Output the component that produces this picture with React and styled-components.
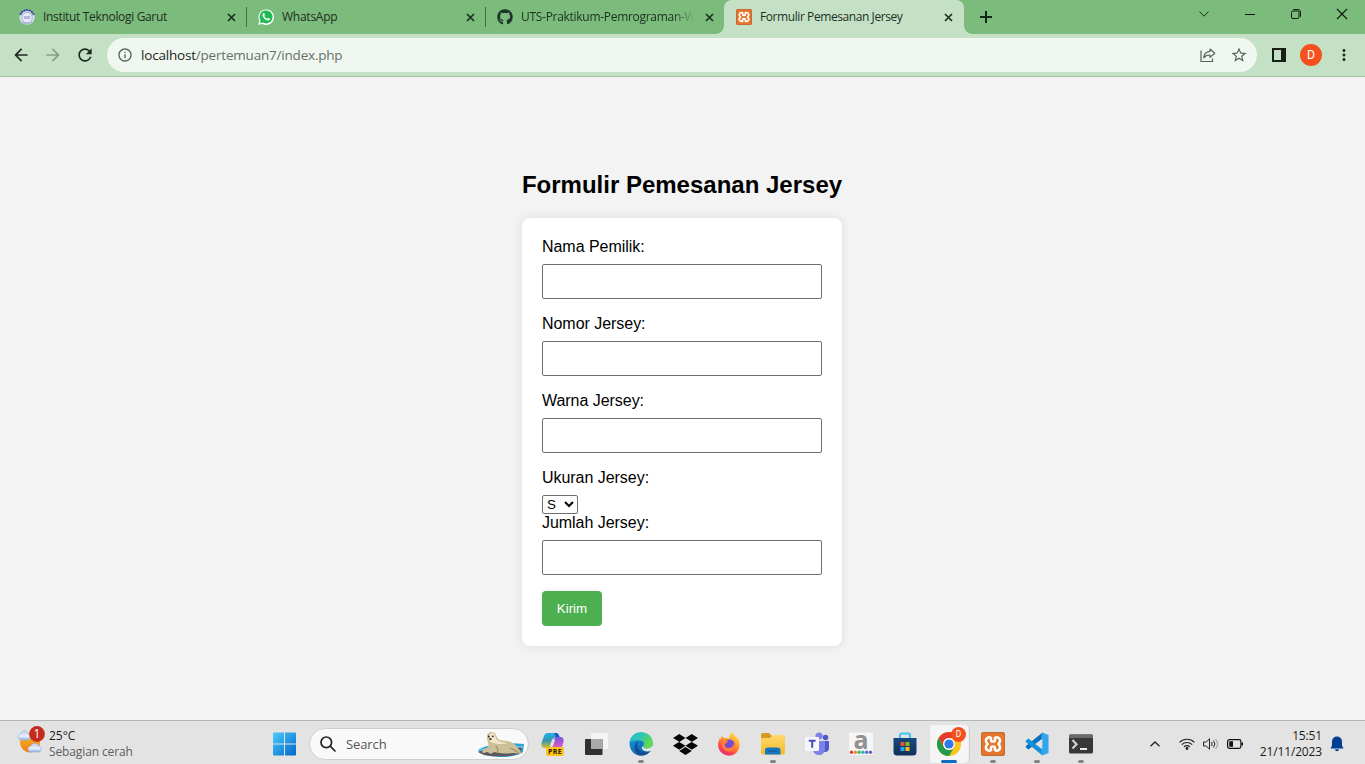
import React from "react";
import styled, { createGlobalStyle } from "styled-components";
import { FaGithub, FaDropbox } from "react-icons/fa";
import { MdArrowBack, MdArrowForward, MdRefresh, MdInfoOutline, MdStarBorder, MdMoreVert } from "react-icons/md";

const Global = createGlobalStyle`
  * { box-sizing: border-box; }
  body { margin: 0; overflow: hidden; }
  svg { display: block; flex: none; overflow: visible; }
`;

const Screen = styled.div`
  display: flex;
  flex-direction: column;
  width: 1365px;
  height: 764px;
  background: #f3f3f3;
  font-family: "Open Sans", "Noto Sans", sans-serif;
`;

/* ---------- Browser frame ---------- */

const TabStrip = styled.div`
  display: flex;
  height: 34px;
  padding-left: 7px;
  background: #7bbb7c;
`;

const Tab = styled.div`
  position: relative;
  display: flex;
  align-items: center;
  width: ${(p) => (p.$active ? 240 : 239)}px;
  padding: 0 ${(p) => (p.$active ? 9 : 8)}px 0 12px;
  border-radius: 8px 8px 0 0;
  background: ${(p) => (p.$active ? "#c5e1c5" : "transparent")};
  color: #1d2f1e;
  &::before, &::after {
    content: "";
    display: ${(p) => (p.$active ? "block" : "none")};
    position: absolute;
    bottom: 0;
    width: 8px;
    height: 8px;
  }
  &::before { left: -8px; background: radial-gradient(circle at 0 0, transparent 7.5px, #c5e1c5 8px); }
  &::after { right: -8px; background: radial-gradient(circle at 100% 0, transparent 7.5px, #c5e1c5 8px); }
`;

const TabDivider = styled.span`
  align-self: center;
  width: 1px;
  height: 20px;
  margin: 0 -1px 0 0;
  background: #426c43;
`;

const TabTitle = styled.span`
  flex: 1;
  min-width: 0;
  margin-left: 8px;
  margin-right: ${(p) => (p.$fade ? 8 : 0)}px;
  overflow: hidden;
  white-space: nowrap;
  font-size: 12px;
  line-height: 18px;
  letter-spacing: ${(p) => p.$track}px;
  mask-image: ${(p) => (p.$fade ? "linear-gradient(90deg, #000 88%, transparent)" : "none")};
`;

const CloseSlot = styled.span`
  display: grid;
  place-items: center;
  flex: none;
  width: 14px;
  height: 14px;
`;

const NewTab = styled.div`
  display: grid;
  place-items: center;
  width: 44px;
`;

const WindowButtons = styled.div`
  display: flex;
  margin-left: auto;
`;

const WindowButton = styled.div`
  display: grid;
  place-items: center;
  width: 46px;
  height: 28px;
`;

const Toolbar = styled.div`
  display: flex;
  align-items: center;
  height: 43px;
  padding: 0 11px 0 11px;
  background: #c5e1c5;
  border-bottom: 1px solid #a2bba3;
`;

const NavButton = styled.span`
  display: grid;
  place-items: center;
  width: 20px;
  margin-right: 12px;
  color: ${(p) => (p.$off ? "#86a087" : "#1f2a20")};
`;

const AddressBar = styled.div`
  display: flex;
  align-items: center;
  width: 1150px;
  height: 34px;
  padding: 0 9px 0 10px;
  border-radius: 17px;
  background: #f0f7f0;
  color: #59615a;
`;

const Url = styled.span`
  flex: 1;
  margin-left: 8px;
  font-size: 13.500px;
  line-height: 20px;
  letter-spacing: -0.2px;
  white-space: nowrap;
  color: #66706a;
  b { font-weight: 400; color: #1c241d; }
`;

const OmniIcon = styled.span`
  margin-left: 14px;
`;

const Avatar = styled.span`
  display: grid;
  place-items: center;
  width: ${(p) => p.$size}px;
  height: ${(p) => p.$size}px;
  border-radius: 50%;
  background: #f4511e;
  color: #fff;
  font: 400 ${(p) => p.$size / 1.8}px/1 Roboto, sans-serif;
`;

const BrowserActions = styled.div`
  display: flex;
  align-items: center;
  margin-left: 14px;
  gap: 13px;
`;

/* ---------- Page ---------- */

const Page = styled.main`
  flex: 1;
  display: flex;
  flex-direction: column;
  align-items: center;
  padding-top: 94px;
  padding-right: 1px;
  font-family: "Liberation Sans", Arial, sans-serif;
  color: #000;
`;

const Heading = styled.h2`
  margin: 0 0 20px;
  font-size: 24px;
  line-height: 27px;
  white-space: nowrap;
`;

const Form = styled.form`
  width: 320px;
  padding: 20px;
  border-radius: 8px;
  background: #fff;
  box-shadow: 0 0 10px rgba(0, 0, 0, 0.1);
`;

const Label = styled.label`
  display: block;
  margin-bottom: 8px;
  font-size: 16px;
  line-height: 18px;
  letter-spacing: -0.04px;
`;

const Field = styled.input`
  display: block;
  width: 100%;
  height: 35px;
  margin: 0 0 16px;
  padding: 8px;
  border: 1px solid #707070;
  border-radius: 2px;
  background: #fff;
`;

const SizeSelect = styled.select`
  display: block;
  width: 36px;
  height: 19px;
  margin: 0;
  border: 1px solid #707070;
  border-radius: 2px;
  background-color: #fff;
  color: #000;
  font: 13.333px "Liberation Sans", Arial, sans-serif;
`;

const Submit = styled.button`
  display: block;
  width: 60px;
  height: 35px;
  padding: 0;
  border: 0;
  border-radius: 4px;
  background: #4caf50;
  color: #fff;
  font: 13.333px "Liberation Sans", Arial, sans-serif;
`;

/* ---------- Taskbar ---------- */

const Taskbar = styled.footer`
  display: flex;
  height: 44px;
  background: #e3e3e3;
  border-top: 1px solid #b5b5b5;
`;

const Weather = styled.div`
  display: flex;
  width: 262px;
  padding: 4px 0 0 17px;
`;

const WeatherText = styled.div`
  margin: 3px 0 0 4px;
  font-size: 12px;
  line-height: 16px;
  color: #1b1b1b;
  white-space: nowrap;
`;

const Muted = styled.div`
  color: #5d5d5d;
  letter-spacing: ${(p) => p.$track || 0}px;
`;

const AppSlot = styled.div`
  position: relative;
  display: grid;
  place-items: center;
  width: 44px;
  height: 43px;
  padding-top: 3px;
`;

const ActiveTile = styled.div`
  display: grid;
  place-items: center;
  width: 38px;
  height: 38px;
  margin: 0 0 0 -1px;
  border-radius: 4px;
  background: #f5f5f5;
  box-shadow: 2px 0 0 -1px #efefef, 3px 0 0 -1px #cfcfcf;
`;

const RunMark = styled.span`
  position: absolute;
  bottom: ${(p) => (p.$active ? 1 : 1)}px;
  left: 50%;
  width: ${(p) => (p.$active ? 16 : 6)}px;
  height: 3px;
  border-radius: 2px;
  transform: translateX(-50%);
  background: ${(p) => (p.$active ? "#0f6cbd" : "#858585")};
`;

const AppBadge = styled.span`
  position: absolute;
  top: 6px;
  right: 5px;
`;

const SearchBox = styled.div`
  display: flex;
  align-items: center;
  width: 220px;
  height: 32px;
  margin: 7px 2px 0 3px;
  padding-left: 10px;
  border: 1px solid #cfcfcf;
  border-radius: 16px;
  background: #f9f9f9;
  overflow: hidden;
`;

const SearchText = styled.span`
  flex: 1;
  margin-left: 10px;
  font-size: 13px;
  letter-spacing: -0.1px;
  color: #555;
`;

const Tray = styled.div`
  display: flex;
  align-items: center;
  margin-left: auto;
  padding: 2px 21px 0 0;
`;

const TrayIcon = styled.span`
  margin-left: ${(p) => p.$gap}px;
`;

const Clock = styled.div`
  width: 78px;
  font-size: 12px;
  line-height: 16px;
  letter-spacing: -0.15px;
  text-align: right;
  color: #1b1b1b;
`;

/* ---------- Drawings ---------- */

const Cross = () => (
  <svg width="9" height="9" viewBox="0 0 9 9"><path d="M1 1l7 7M8 1L1 8" stroke="#1d2f1e" strokeWidth="1.7" /></svg>
);

const CampusIcon = () => (
  <svg width="16" height="16" viewBox="0 0 16 16">
    <circle cx="8" cy="8" r="7.7" fill="#d8e0ee" />
    <path d="M1.300 6A7 7 0 0 1 14.700 6" fill="none" stroke="#34458c" strokeWidth="1.800" strokeDasharray="2.200 .4" />
    <circle cx="8" cy="8.6" r="5.2" fill="#e9edf7" stroke="#8f9bcc" strokeWidth=".7" />
    <path d="M5.200 7.400h5.600v2.200H5.200z" fill="#b3bcdf" stroke="#98a2d0" strokeWidth=".6" />
    <path d="M3 12.7a6.800 6.800 0 0 0 10 0" fill="none" stroke="#a8b2d4" strokeWidth="1.2" />
  </svg>
);

const WhatsIcon = () => (
  <svg width="16" height="16" viewBox="0 0 16 16">
    <path d="M.2 15.8l1.1-4A7.8 7.8 0 1 1 4.4 15z" fill="#fff" />
    <path d="M1.8 14.2l.8-2.8a6.5 6.5 0 1 1 2.2 2.1z" fill="#20b954" />
    <path d="M5.7 4.1c-.5 0-1.4.8-1.2 2.1.3 2.3 3 5 5.3 5.3 1.3.2 2.2-.8 2.1-1.7-.5-.4-1.2-.8-1.8-.9l-.9 1C8 9.500 6.700 8.200 6.200 7.100l.7-.8c-.1-.8-.4-1.600-.7-2.200z" fill="#fff" />
  </svg>
);

const XamppFrame = styled.span`
  display: grid;
  flex: none;
  place-items: center;
  width: ${(p) => p.$size}px;
  height: ${(p) => p.$size}px;
  border-radius: ${(p) => p.$size / 8}px;
  background: #e4762d;
  box-shadow: inset 0 0 0 1px #c8682a;
`;

const XamppGlyph = ({ size }) => (
  <XamppFrame $size={size}>
    <svg width={size} height={size} viewBox="0 0 24 24">
      <path
        d="M10 5.800C7.500 4.600 4.800 6 4.900 8.800c0 1.500.8 2.400 1.900 3.200-1.100.8-1.900 1.700-1.900 3.200-.1 2.800 2.600 4.200 5.100 3v-2.400q0-1.400 2-1.400t2 1.400v2.400c2.500 1.200 5.200-.2 5.100-3 0-1.500-.8-2.400-1.900-3.200 1.100-.8 1.900-1.700 1.900-3.200.1-2.800-2.600-4.200-5.100-3v2.400q0 1.400-2 1.400t-2-1.400z"
        fill="none" stroke="#fff" strokeWidth="2.500" strokeLinejoin="round"
      />
    </svg>
  </XamppFrame>
);

const ShareIcon = () => (
  <svg width="16" height="16" viewBox="0 0 16 16" fill="none" stroke="#59615a" strokeWidth="1.200">
    <path d="M1 3.500v11h11.500v-3" />
    <path d="M10 2l4.800 4.200L10 10.400V8C7 7.900 5.200 8.800 3.800 10.800 4 7.200 6.200 4.800 10 4.400z" strokeLinejoin="round" />
  </svg>
);

const WeatherIcon = () => (
  <svg width="28" height="30" viewBox="0 0 28 30">
    <defs>
      <linearGradient id="sun" x1="0" y1="0" x2="0" y2="1"><stop stopColor="#fbb924" /><stop offset="1" stopColor="#ef7d16" /></linearGradient>
      <linearGradient id="cloud" x1="0" y1="0" x2="0" y2="1"><stop stopColor="#b9cdec" /><stop offset=".6" stopColor="#e8effb" /><stop offset="1" stopColor="#8dafe3" /></linearGradient>
    </defs>
    <circle cx="13" cy="17.500" r="10" fill="url(#sun)" />
    <path d="M4 15a3.300 3.300 0 0 1 0-6.500C5 4.500 10.500 5 11 8.600c3.500.4 3.500 6.400 0 6.400z" fill="url(#cloud)" stroke="#9cb5dc" strokeWidth=".6" />
    <path d="M14 27a3 3 0 0 1 0-6c1-3.800 6.500-3.600 7.300-.2 4 .2 4 6.200 0 6.200z" fill="url(#cloud)" stroke="#8fadde" strokeWidth=".6" />
    <circle cx="20" cy="9" r="7.900" fill="#c42b1c" />
    <text x="20" y="13.300" textAnchor="middle" fontSize="12" fontFamily="Open Sans" fill="#fff">1</text>
  </svg>
);

const StartIcon = () => (
  <svg width="24" height="24" viewBox="-.5 0 24 24">
    <defs><linearGradient id="win" x1="0" y1="0" x2="1" y2="1"><stop stopColor="#4ccbff" /><stop offset="1" stopColor="#0067c8" /></linearGradient></defs>
    <path d="M1.500.5h10v11h-11v-10a1 1 0 0 1 1-1zM12.500.5h10a1 1 0 0 1 1 1v10h-11zM.5 12.500h11v11h-10a1 1 0 0 1-1-1zM12.500 12.500h11v10a1 1 0 0 1-1 1h-10z" fill="url(#win)" />
  </svg>
);

const SealIcon = () => (
  <svg width="53" height="30" viewBox="0 0 53 30">
    <path d="M3 21c9-6 28-8 46-6l-1 8c-6 6-30 6-35 3-6-1-10-2-10-5z" fill="#2ba3d5" />
    <path d="M3 23c6-3 37-6 44-4l-2 5c-6 4-29 4-36 2z" fill="#5d5661" />
    <path d="M3 22c8-4 34-5 45-4" fill="none" stroke="#99d6e8" strokeWidth="1" />
    <path d="M12 9c-1-7 8-8 9.500-2 1 5 5 4 10 5 8 1 10 5 13 9l3 4-9-1c-7 1-14 .5-19-1l-4 2-3-2-4 1c-3-1-1-3 2-4 3-2 3-3 3-5-1-2-1.500-4-1.500-6z" fill="#cdbf98" />
    <path d="M14 7c1-4 6-4 6.500 1s7 5 12 6c-7 2-12 1-17-1z" fill="#efe6cb" />
    <path d="M21 17c2 3 3 5 1 7M35 19c3 1 6 3 9 5" fill="none" stroke="#9e8e68" strokeWidth="1.200" />
    <circle cx="13.800" cy="7.500" r=".9" fill="#222" /><circle cx="17.800" cy="7.300" r=".9" fill="#222" /><circle cx="15.500" cy="10" r="1.100" fill="#29231e" />
  </svg>
);

const CopilotIcon = () => (
  <svg width="24" height="24" viewBox="0 0 24 24">
    <defs>
      <linearGradient id="cpa" x1="0" y1="0" x2="0" y2="1"><stop stopColor="#1bb1e8" /><stop offset=".5" stopColor="#3994b0" /><stop offset="1" stopColor="#d0c22d" /></linearGradient>
      <linearGradient id="cpb" x1="0" y1="0" x2="0" y2="1"><stop stopColor="#7456dd" /><stop offset=".6" stopColor="#cf58cf" /><stop offset="1" stopColor="#f58a4f" /></linearGradient>
    </defs>
    <path d="M7 1h8c2 0 3 2 3.500 4h-4c-2 0-3 2-4 6L9 16H4c-3 0-4-2-3.500-5L3 4c.7-2 2-3 4-3z" fill="url(#cpa)" />
    <path d="M13 1h2c2 0 3 2 3.500 4h-4c0-2-1-3-1.500-4z" fill="#2455c7" />
    <path d="M15 5h4c3 0 4 2 3.500 5L21 15c-1 3-2 4-4 4H8c3-1 3-3 4-7 1-5 1-7 3-7z" fill="url(#cpb)" />
    <path d="M11 7.500h3l-2 6.500H9z" fill="#e3e3e3" />
    <rect x="5" y="15" width="18" height="9" rx="2" fill="#ffc31a" />
    <text x="14" y="22.200" textAnchor="middle" fontSize="7" fontWeight="700" letterSpacing=".4" fontFamily="Open Sans" fill="#221b00">PRE</text>
  </svg>
);

const TaskViewIcon = () => (
  <svg width="24" height="24" viewBox="1 0 24 24">
    <rect x="7" y="1" width="17" height="16" rx="1" fill="#f4f4f4" />
    <rect x="1" y="7" width="17.500" height="16" rx="1" fill="#303030" />
    <path d="M7 7h11.500v10H7z" fill="#a9a9a9" />
  </svg>
);

const EdgeIcon = () => (
  <svg width="24" height="24" viewBox="0 0 24 24">
    <defs>
      <linearGradient id="edA" x1="0" y1="0" x2="1" y2=".5"><stop stopColor="#24b8dc" /><stop offset=".5" stopColor="#30c7b1" /><stop offset="1" stopColor="#65d94c" /></linearGradient>
      <linearGradient id="edB" x1="0" y1="0" x2=".6" y2="1"><stop stopColor="#1ca6e2" /><stop offset="1" stopColor="#0d5aa9" /></linearGradient>
    </defs>
    <circle cx="12" cy="12" r="11.500" fill="url(#edB)" />
    <path d="M.7 10C2 3.500 6.500.3 12 .3c6.700 0 12 4.700 11.800 10.200-.1 3.700-2.700 6-6.200 6-3 0-4.200-1.200-3.500-2.300 2-2.700-.2-6-4-6C6 8.200 2 9 .7 10z" fill="url(#edA)" />
    <path d="M9.500 9c-3 4-1 10 5 11.300 2.700.6 5.500-.3 7.500-1.800-2 3.300-6 5.200-10.500 5-6-1-8.500-11-2-14.500z" fill="#114e91" />
    <path d="M14.100 14.200c-.7 1.100.5 2.300 3.500 2.300 2.300 0 4.500-1 5.700-3l.7 3-1.700 2c-3 1.500-6.500 1.200-8.300-.5-1.800-1.500-1.700-3.500.1-3.800z" fill="#e3e6e6" />
  </svg>
);

const FirefoxIcon = () => (
  <svg width="24" height="24" viewBox="0 0 24 24">
    <defs><linearGradient id="ff" x1=".8" y1="0" x2=".25" y2="1"><stop stopColor="#ffe54a" /><stop offset=".42" stopColor="#ff9a28" /><stop offset=".72" stopColor="#ff4c47" /><stop offset="1" stopColor="#df2478" /></linearGradient></defs>
    <path d="M5 4l2 2.200c2-.5 4 .1 5 .5.3-2.500 1.500-5 4-6.500.2 2.500 2 3.200 3.500 5l.5 1c.8 0 1-.2 1-.2 4 7.500.4 17.700-9 17.700C4.500 23.700-1 16 1.800 8.800c.2-.8.700-1.700 1.200-2.200v2C3.500 6.500 4 5.200 5 4z" fill="url(#ff)" />
    <circle cx="12.500" cy="12.700" r="5.200" fill="#7649da" />
    <path d="M5 10c2-2 5.500-1.500 6.500 0-2 0-2 1.200-3.500 2-1 3 2 4.700 4.500 4 3-.8 4.500-3 4-5.500 3 4 .5 9-4 9-5 0-8-4-7.500-9.500z" fill="#ff7d36" />
  </svg>
);

const FolderIcon = () => (
  <svg width="26" height="24" viewBox="0 0 26 24">
    <defs><linearGradient id="fo" x1="0" y1="0" x2="0" y2="1"><stop stopColor="#ffda70" /><stop offset="1" stopColor="#f4b928" /></linearGradient></defs>
    <path d="M1 3a2 2 0 0 1 2-2h6l3 3h11v6H1z" fill="#d99b1b" />
    <path d="M1 6h9l3-3h11a1 1 0 0 1 1 1v16.500a2 2 0 0 1-2 2H3a2 2 0 0 1-2-2z" fill="url(#fo)" />
    <path d="M5 22.500v-4a3 3 0 0 1 3-3h9.500a3 3 0 0 1 3 3v4z" fill="#1477c2" />
    <path d="M8 19.200h9.500" stroke="#145fa1" strokeWidth="1.500" />
  </svg>
);

const TeamsIcon = () => (
  <svg width="26" height="24" viewBox="0 0 26 24">
    <circle cx="21.500" cy="5.500" r="2.800" fill="#5059c9" /><circle cx="15" cy="4" r="3.600" fill="#7b83eb" />
    <path d="M17 9h8v7c0 5-6 5-7 2z" fill="#5059c9" />
    <path d="M9 9h12v8c0 8-12 8-12 0z" fill="#7b83eb" />
    <rect x="1" y="5" width="14" height="14" rx="1" fill="#f7f7fb" />
    <path d="M4.800 8.800h6.800M8.200 8.800v7" stroke="#464eb8" strokeWidth="2" />
  </svg>
);

const AlphaIcon = () => (
  <svg width="24" height="24" viewBox="0 0 24 24">
    <rect y=".5" width="24" height="22.500" fill="#f6f6f6" />
    <text x="12" y="16.500" textAnchor="middle" fontSize="25" fontWeight="700" fontFamily="Open Sans" fill="#929292">a</text>
    {["#df3838", "#f08a32", "#45b562", "#2bb3ae", "#5273d3", "#765bc0"].map((c, i) => <circle key={c} cx={2.500 + i * 3.800} cy="20.300" r="1.700" fill={c} />)}
  </svg>
);

const StoreIcon = () => (
  <svg width="24" height="24" viewBox="0 0 24 24">
    <defs><linearGradient id="st" x1="0" y1="0" x2="0" y2="1"><stop stopColor="#174a7d" /><stop offset="1" stopColor="#11305c" /></linearGradient></defs>
    <path d="M7 6V3a1.500 1.500 0 0 1 1.500-1.500h7A1.500 1.500 0 0 1 17 3v3" fill="none" stroke="#43c1ef" strokeWidth="2" />
    <path d="M.5 6h23v14a3.500 3.500 0 0 1-3.500 3.500H4A3.500 3.500 0 0 1 .5 20z" fill="url(#st)" />
    <path d="M7.500 10h4v4h-4z" fill="#f05124" /><path d="M12.500 10h4v4h-4z" fill="#7fba22" /><path d="M7.500 15h4v4h-4z" fill="#24a5ec" /><path d="M12.500 15h4v4h-4z" fill="#fdb913" />
  </svg>
);

const ChromeIcon = () => (
  <svg width="24" height="24" viewBox="0 0 24 24">
    <circle cx="12" cy="12" r="12" fill="#fcc31e" />
    <path d="M1.600 6A12 12 0 0 1 22.400 6H12a6 6 0 0 0-5.200 9z" fill="#e33b2e" />
    <path d="M1.600 6A12 12 0 0 0 12 24l5.200-9A6 6 0 0 1 6.800 15z" fill="#229b4b" />
    <circle cx="12" cy="12" r="5.900" fill="#fff" /><circle cx="12" cy="12" r="4.600" fill="#3179e8" />
  </svg>
);

const CodeIcon = () => (
  <svg width="24" height="24" viewBox="0 0 24 24">
    <path d="M17.500.4v6L3.500 17.400l-2.700-2.200 0-1.200z" fill="#0870bd" />
    <path d="M.8 8.800l2.700-2.200 14 11v6L.8 10z" fill="#168fdc" />
    <path d="M17.500.4L16.500 2v20l1 1.600L23.500 21V3z" fill="#31a5ed" />
    <path d="M17.300 7l-6.600 5 6.600 5z" fill="#e3e3e3" />
  </svg>
);

const TerminalIcon = () => (
  <svg width="24" height="20" viewBox="0 0 24 20">
    <rect width="24" height="19" y=".5" rx="1.500" fill="#383838" /><path d="M0 4V2A1.500 1.500 0 0 1 1.500.5h21A1.500 1.500 0 0 1 24 2v2z" fill="#6a6a6a" />
    <path d="M3.500 6l4 4.200-4 4.200" fill="none" stroke="#d2d2d2" strokeWidth="2.200" /><path d="M11 15h7" stroke="#fff" strokeWidth="1.800" />
  </svg>
);

const apps = [
  { id: "copilot", icon: <CopilotIcon /> },
  { id: "taskview", icon: <TaskViewIcon /> },
  { id: "edge", icon: <EdgeIcon />, running: true },
  { id: "dropbox", icon: <FaDropbox size={25} color="#050505" /> },
  { id: "firefox", icon: <FirefoxIcon /> },
  { id: "files", icon: <FolderIcon />, running: true },
  { id: "teams", icon: <TeamsIcon /> },
  { id: "alpha", icon: <AlphaIcon /> },
  { id: "store", icon: <StoreIcon /> },
  { id: "chrome", icon: <ChromeIcon />, active: true },
  { id: "xampp", icon: <XamppGlyph size={24} />, running: true },
  { id: "code", icon: <CodeIcon />, running: true },
  { id: "terminal", icon: <TerminalIcon />, running: true },
];

const tabs = [
  { title: "Institut Teknologi Garut", icon: <CampusIcon />, track: -0.33, divider: true },
  { title: "WhatsApp", icon: <WhatsIcon />, track: -0.25, divider: true },
  { title: "UTS-Praktikum-Pemrograman-Web", icon: <FaGithub size={16} color="#20352a" />, track: -0.29, fade: true },
  { title: "Formulir Pemesanan Jersey", icon: <XamppGlyph size={16} />, track: -0.42, active: true },
];

export default function App() {
  return (
    <Screen>
      <Global />
      <TabStrip>
        {tabs.map((t) => (
          <React.Fragment key={t.title}>
            <Tab $active={t.active}>
              {t.icon}
              <TabTitle $track={t.track} $fade={t.fade}>{t.title}</TabTitle>
              <CloseSlot><Cross /></CloseSlot>
            </Tab>
            {t.divider && <TabDivider />}
          </React.Fragment>
        ))}
        <NewTab>
          <svg width="12" height="12" viewBox="0 0 12 12"><path d="M6 0v12M0 6h12" stroke="#16251a" strokeWidth="2" /></svg>
        </NewTab>
        <WindowButtons>
          <WindowButton><svg width="10" height="6" viewBox="0 0 10 6"><path d="M.5.5L5 5.200 9.500.5" fill="none" stroke="#18301a" /></svg></WindowButton>
          <WindowButton><svg width="10" height="3" viewBox="0 0 10 3"><path d="M0 1.500h10" stroke="#0d180e" /></svg></WindowButton>
          <WindowButton><svg width="10" height="10" viewBox="0 0 10 10" fill="none" stroke="#0d180e"><rect x=".5" y="2" width="7.500" height="7.500" rx="1.500" /><path d="M2.300.6h4.700a2.500 2.500 0 0 1 2.500 2.500v4.600" /></svg></WindowButton>
          <WindowButton><svg width="10" height="10" viewBox="0 0 10 10"><path d="M0 0l10 10M10 0L0 10" stroke="#0d180e" strokeWidth="1.100" /></svg></WindowButton>
        </WindowButtons>
      </TabStrip>
      <Toolbar>
        <NavButton><MdArrowBack size={20} /></NavButton>
        <NavButton $off><MdArrowForward size={20} /></NavButton>
        <NavButton><MdRefresh size={20} /></NavButton>
        <AddressBar>
          <MdInfoOutline size={16} />
          <Url><b>localhost</b>/pertemuan7/index.php</Url>
          <ShareIcon />
          <OmniIcon><MdStarBorder size={18} /></OmniIcon>
        </AddressBar>
        <BrowserActions>
          <svg width="16" height="14" viewBox="0 0 16 14"><path d="M1 0h14v14H1zM3 2v10h7V2z" fill="#171f18" fillRule="evenodd" /></svg>
          <Avatar $size={22}>D</Avatar>
          <MdMoreVert size={18} color="#1f2a20" />
        </BrowserActions>
      </Toolbar>
      <Page>
        <Heading>Formulir Pemesanan Jersey</Heading>
        <Form>
          <Label>Nama Pemilik:</Label>
          <Field />
          <Label>Nomor Jersey:</Label>
          <Field />
          <Label>Warna Jersey:</Label>
          <Field />
          <Label>Ukuran Jersey:</Label>
          <SizeSelect defaultValue="S"><option>S</option></SizeSelect>
          <Label>Jumlah Jersey:</Label>
          <Field />
          <Submit type="button">Kirim</Submit>
        </Form>
      </Page>
      <Taskbar>
        <Weather>
          <WeatherIcon />
          <WeatherText>25°C<Muted $track={-0.12}>Sebagian cerah</Muted></WeatherText>
        </Weather>
        <AppSlot><StartIcon /></AppSlot>
        <SearchBox>
          <svg width="16" height="16" viewBox="0 0 16 16" fill="none" stroke="#242424" strokeWidth="1.700"><circle cx="6.300" cy="6.300" r="5.300" /><path d="M10.200 10.200l4.800 4.800" strokeLinecap="round" /></svg>
          <SearchText>Search</SearchText>
          <SealIcon />
        </SearchBox>
        {apps.map((a) => (
          <AppSlot key={a.id}>
            {a.active ? <ActiveTile>{a.icon}</ActiveTile> : a.icon}
            {a.active && <AppBadge><Avatar $size={15}>D</Avatar></AppBadge>}
            {(a.running || a.active) && <RunMark $active={a.active} />}
          </AppSlot>
        ))}
        <Tray>
          <svg width="10" height="6" viewBox="0 0 10 6"><path d="M.5 5.300L5 1l4.500 4.300" fill="none" stroke="#222" strokeWidth="1.300" /></svg>
          <TrayIcon $gap={19}><svg width="16" height="12" viewBox="0 0 16 12" fill="none" stroke="#222" strokeWidth="1.100"><path d="M.6 4.300a10.500 10.500 0 0 1 14.800 0M2.800 6.600a7.400 7.400 0 0 1 10.400 0M5 8.900a4.200 4.200 0 0 1 6 0" /><circle cx="8" cy="10.500" r=".9" fill="#222" /></svg></TrayIcon>
          <TrayIcon $gap={8}><svg width="16" height="12" viewBox="0 0 16 12" fill="none" stroke="#222" strokeWidth="1"><path d="M.5 4h2.700L6.500.8v10.400L3.200 8H.5zM8.500 4q1.400 2 0 4M10.500 2.500q2.700 3.500 0 7" /><path d="M12.600 1q3.800 5 0 10" stroke="#999" /></svg></TrayIcon>
          <TrayIcon $gap={8}><svg width="17" height="10" viewBox="0 0 17 10"><rect x=".6" y=".6" width="13.300" height="8.800" rx="1.800" fill="none" stroke="#111" strokeWidth="1.200" /><path d="M2.300 2.300H6v5.400H2.300zM14.500 3.500H16v3h-1.500z" fill="#111" /></svg></TrayIcon>
          <Clock>15:51<br />21/11/2023</Clock>
          <TrayIcon $gap={8}><svg width="14" height="16" viewBox="0 0 14 16"><path d="M7 .5a5 5 0 0 1 5 5v4l1.500 3H.5l1.500-3v-4a5 5 0 0 1 5-5zM5 13.300h4a2 2 0 0 1-4 0z" fill="#003e92" /></svg></TrayIcon>
        </Tray>
      </Taskbar>
    </Screen>
  );
}
